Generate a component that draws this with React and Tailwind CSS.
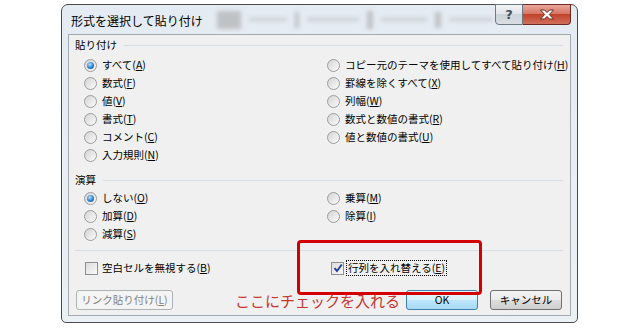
import React from "react";

const jp = { fontFamily: '"Noto Sans CJK JP", "Noto Sans", sans-serif' };

const Label = ({ text, k }) => (
  <span>
    {text}(<span className="underline">{k}</span>)
  </span>
);

const Radio = ({ checked, text, k }) => (
  <div className="h-[18px] flex items-center">
    <span className="w-[13px] h-[13px] rounded-full border border-[#9c9c9c] bg-gradient-to-br from-[#d4d4d4] to-[#fbfbfb] flex items-center justify-center shrink-0">
      {checked && (
        <span className="w-[7px] h-[7px] rounded-full bg-[radial-gradient(circle_at_40%_35%,#b9e4ff,#2a7fd0_55%,#0d4d92)]" />
      )}
    </span>
    <span className="ml-[5px] whitespace-nowrap">
      <Label text={text} k={k} />
    </span>
  </div>
);

const Check = ({ checked }) => (
  <span className="w-[13px] h-[13px] border border-[#8e8f8f] bg-gradient-to-br from-[#dcdcdc] to-[#fafafa] flex items-center justify-center shrink-0">
    {checked && (
      <svg width="10" height="10" viewBox="0 0 10 10">
        <path d="M1.5 5.2 L4 8 L8.8 1.5" fill="none" stroke="#233f9a" strokeWidth="2" />
      </svg>
    )}
  </span>
);

const GroupLabel = ({ text }) => (
  <div className="h-[18px] flex items-center">
    <span>{text}</span>
    <span className="flex-1 h-px bg-[#d5dfe5] ml-[7px]" />
  </div>
);

const Button = ({ children, variant, className = "" }) => {
  const styles = {
    normal:
      "border-[#707070] bg-[linear-gradient(#f3f3f3,#ebebeb_50%,#dddddd_50%,#cfcfcf)] text-black",
    primary:
      "border-[#3c7fb1] bg-[linear-gradient(#eaf6fd,#d9f0fc_50%,#bee6fd_50%,#a7d9f5)] text-black",
    disabled: "border-[#adb2b5] bg-[#f4f4f4] text-[#838383]",
  };
  return (
    <div
      className={`h-[20px] rounded-[3px] border flex items-center justify-center ${styles[variant]} ${className}`}
    >
      {children}
    </div>
  );
};

export default function App() {
  return (
    <div className="w-[640px] h-[330px] bg-white pl-[61px] pt-[4px] relative" style={jp}>
      <div className="w-[517px] h-[319px] border border-[#4b4b4b] rounded-t-[7px] rounded-b-[5px] bg-gradient-to-b from-[#e4ebf2] to-[#ebf0f4] px-[6px] pb-[6px] flex flex-col">
        {/* title bar */}
        <div className="h-[29px] flex items-start">
          <div className="text-[12px] text-black mt-[7px] ml-[3px] whitespace-nowrap">
            形式を選択して貼り付け
          </div>
          <div className="flex-1 h-full flex items-center ml-[14px] mr-[2px] gap-[8px] blur-[2px] opacity-50">
            <div className="w-[24px] h-[18px] bg-[#9a9a9a]" />
            <div className="w-[38px] h-[3px] bg-[#a8a8a8]" />
            <div className="w-[4px] h-[16px] bg-[#9a9a9a]" />
            <div className="w-[52px] h-[3px] bg-[#a8a8a8]" />
            <div className="w-[6px] h-[18px] bg-[#9a9a9a]" />
            <div className="w-[46px] h-[3px] bg-[#a8a8a8]" />
            <div className="w-[6px] h-[16px] bg-[#9a9a9a]" />
            <div className="flex-1 h-[3px] bg-[#a8a8a8]" />
          </div>
          <div className="flex -mt-px">
            <div className="w-[28px] h-[21px] border border-[#6c7884] rounded-bl-[4px] bg-[linear-gradient(#f2f4f6,#dfe3e8_50%,#cdd3d9_50%,#d9dee3)] flex items-center justify-center text-[13px] font-bold text-[#44505c]" style={{ fontFamily: '"DejaVu Sans", sans-serif' }}>
              ?
            </div>
            <div className="w-[48px] h-[21px] border border-l-0 border-[#6b2b22] rounded-br-[4px] bg-[linear-gradient(#e9a99c,#d4715f_50%,#c2412a_50%,#d0705a)] flex items-center justify-center">
              <svg width="16" height="11" viewBox="0 0 16 11">
                <path
                  d="M1.5 1 H5.5 L8 3.6 L10.5 1 H14.5 L10.3 5.5 L14.5 10 H10.5 L8 7.4 L5.5 10 H1.5 L5.7 5.5 Z"
                  fill="#ffffff"
                  stroke="#6a2a20"
                  strokeWidth="1"
                  strokeLinejoin="round"
                />
              </svg>
            </div>
          </div>
        </div>

        {/* client area */}
        <div className="flex-1 border border-[#a2a9b0] bg-[#f0f0f0] pl-[6px] pr-[7px] pt-px text-[10.5px] text-black flex flex-col">
          <GroupLabel text="貼り付け" />
          <div className="grid grid-cols-[243px_1fr] pl-[9px] mt-[2px]">
            <div className="flex flex-col">
              <Radio checked text="すべて" k="A" />
              <Radio text="数式" k="F" />
              <Radio text="値" k="V" />
              <Radio text="書式" k="T" />
              <Radio text="コメント" k="C" />
              <Radio text="入力規則" k="N" />
            </div>
            <div className="flex flex-col">
              <Radio text="コピー元のテーマを使用してすべて貼り付け" k="H" />
              <Radio text="罫線を除くすべて" k="X" />
              <Radio text="列幅" k="W" />
              <Radio text="数式と数値の書式" k="R" />
              <Radio text="値と数値の書式" k="U" />
            </div>
          </div>

          <div className="mt-[7px]">
            <GroupLabel text="演算" />
          </div>
          <div className="grid grid-cols-[243px_1fr] pl-[9px]">
            <div className="flex flex-col">
              <Radio checked text="しない" k="O" />
              <Radio text="加算" k="D" />
              <Radio text="減算" k="S" />
            </div>
            <div className="flex flex-col">
              <Radio text="乗算" k="M" />
              <Radio text="除算" k="I" />
            </div>
          </div>

          <div className="h-px bg-[#d5dfe5] mt-[7px]" />

          <div className="grid grid-cols-[246px_1fr] pl-[10px] mt-[8px]">
            <div className="h-[18px] flex items-center">
              <Check />
              <span className="ml-[4px]">
                <Label text="空白セルを無視する" k="B" />
              </span>
            </div>
            <div className="h-[18px] flex items-center">
              <Check checked />
              <span className="ml-[2px] border border-dotted border-black px-px leading-[14px]">
                <Label text="行列を入れ替える" k="E" />
              </span>
            </div>
          </div>

          <div className="flex items-center mt-[13px] ml-px">
            <Button variant="disabled" className="w-[97px]">
              <Label text="リンク貼り付け" k="L" />
            </Button>
            <span className="ml-auto mr-[6px] text-[15px] text-[#c8352c] leading-none">
              ここにチェックを入れる
            </span>
            <Button variant="primary" className="w-[72px]">
              OK
            </Button>
            <Button variant="normal" className="w-[72px] ml-[12px] mr-px">
              キャンセル
            </Button>
          </div>
        </div>
      </div>

      {/* annotation box */}
      <div className="absolute left-[297px] top-[240px] w-[185px] h-[55px] border-[3px] border-[#d40000] rounded-[4px]" />
    </div>
  );
}
